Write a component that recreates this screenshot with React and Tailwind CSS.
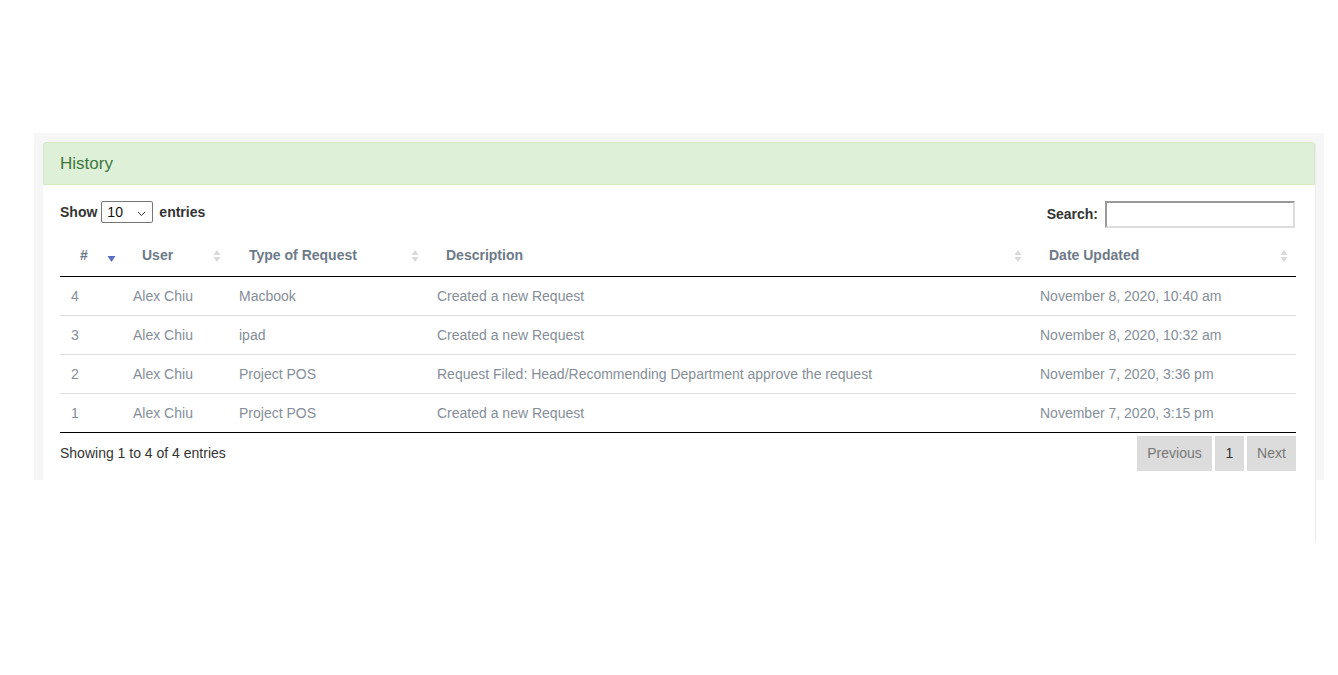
import React from "react";

const rows = [
  ["4", "Alex Chiu", "Macbook", "Created a new Request", "November 8, 2020, 10:40 am"],
  ["3", "Alex Chiu", "ipad", "Created a new Request", "November 8, 2020, 10:32 am"],
  ["2", "Alex Chiu", "Project POS", "Request Filed: Head/Recommending Department approve the request", "November 7, 2020, 3:36 pm"],
  ["1", "Alex Chiu", "Project POS", "Created a new Request", "November 7, 2020, 3:15 pm"],
];

function SortBoth() {
  return (
    <svg width="8" height="14" viewBox="0 0 8 14" className="absolute right-[8px] top-1/2 -translate-y-1/2">
      <path d="M4 1 L7.5 6 L0.5 6 Z" fill="#d9d9d9" />
      <path d="M4 13 L7.5 8 L0.5 8 Z" fill="#d9d9d9" />
    </svg>
  );
}

function SortDesc() {
  return (
    <svg width="9" height="14" viewBox="0 0 9 14" className="absolute right-[7px] top-[18px]">
      <path d="M0.5 2 L8.5 2 L4.5 8 Z" fill="#5b6fc2" />
    </svg>
  );
}

export default function App() {
  return (
    <div className="w-[1338px] h-[675px] bg-white pt-[133px] font-['Liberation_Sans',Arial,sans-serif] text-[14px]">
      <div className="ml-[34px] w-[1290px] h-[347px] bg-[#f6f6f6] pt-[9px] pl-[9px]">
        <div className="w-[1273px] h-[400px] bg-white border-r border-[#ececec] rounded-t-[3px]">
          <div className="h-[43px] bg-[#dff0d8] border border-[#d6e9c6] rounded-t-[3px] flex items-center pl-[16px] pt-[1px] text-[17px] text-[#3c763d]">
            History
          </div>
          <div className="px-[17px] pt-[16px]">
            <div className="w-[1235px] flex items-start justify-between h-[27px]">
              <div className="flex items-center gap-[4px] font-bold text-[#333] h-[22px]">
                <span>Show</span>
                <div className="relative w-[52px] h-[22px] border border-[#767676] rounded-[2px] bg-white flex items-center pl-[5px] font-normal text-[#111]">
                  10
                  <svg width="9" height="6" viewBox="0 0 9 6" className="absolute right-[6px] top-[9px]">
                    <path d="M1 1 L4.5 4.5 L8 1" stroke="#333" strokeWidth="1" fill="none" />
                  </svg>
                </div>
                <span className="ml-[2px]">entries</span>
              </div>
              <div className="flex items-center gap-[7px] font-bold text-[#333] h-[27px]">
                <span>Search:</span>
                <div className="w-[190px] h-[27px] border-2 border-t-[#999] border-l-[#999] border-r-[#ddd] border-b-[#ddd] bg-white" />
              </div>
            </div>
            <table className="table-fixed w-[1236px] mt-[8px] border-collapse border-b border-black">
              <colgroup>
                <col className="w-[63px]" />
                <col className="w-[106px]" />
                <col className="w-[198px]" />
                <col className="w-[603px]" />
                <col className="w-[266px]" />
              </colgroup>
              <thead>
                <tr className="h-[40px] border-b border-black">
                  <th className="relative text-left font-bold text-[#6d7a88] pl-[20px]">
                    #<SortDesc />
                  </th>
                  <th className="relative text-left font-bold text-[#6d7a88] pl-[19px]">
                    User<SortBoth />
                  </th>
                  <th className="relative text-left font-bold text-[#6d7a88] pl-[20px]">
                    Type of Request<SortBoth />
                  </th>
                  <th className="relative text-left font-bold text-[#6d7a88] pl-[19px]">
                    Description<SortBoth />
                  </th>
                  <th className="relative text-left font-bold text-[#6d7a88] pl-[19px]">
                    Date Updated<SortBoth />
                  </th>
                </tr>
              </thead>
              <tbody>
                {rows.map((r, i) => (
                  <tr key={i} className={i === 0 ? "h-[39px]" : "h-[39px] border-t border-[#dddddd]"}>
                    <td className="pl-[11px] pt-[1px] text-[#858e98]">{r[0]}</td>
                    <td className="pl-[10px] pt-[1px] text-[#858e98]">{r[1]}</td>
                    <td className="pl-[10px] pt-[1px] text-[#858e98]">{r[2]}</td>
                    <td className="pl-[10px] pt-[1px] text-[#858e98]">{r[3]}</td>
                    <td className="pl-[10px] pt-[1px] text-[#858e98]">{r[4]}</td>
                  </tr>
                ))}
              </tbody>
            </table>
            <div className="w-[1236px] mt-[3px] h-[35px] flex items-center justify-between">
              <span className="text-[#333]">Showing 1 to 4 of 4 entries</span>
              <div className="flex gap-[3px] h-[35px]">
                <div className="w-[75px] h-full bg-[#dcdcdc] flex items-center justify-center text-[#777]">Previous</div>
                <div className="w-[29px] h-full bg-[#dcdcdc] flex items-center justify-center text-[#333]">1</div>
                <div className="w-[49px] h-full bg-[#dcdcdc] flex items-center justify-center text-[#777]">Next</div>
              </div>
            </div>
          </div>
        </div>
      </div>
    </div>
  );
}
